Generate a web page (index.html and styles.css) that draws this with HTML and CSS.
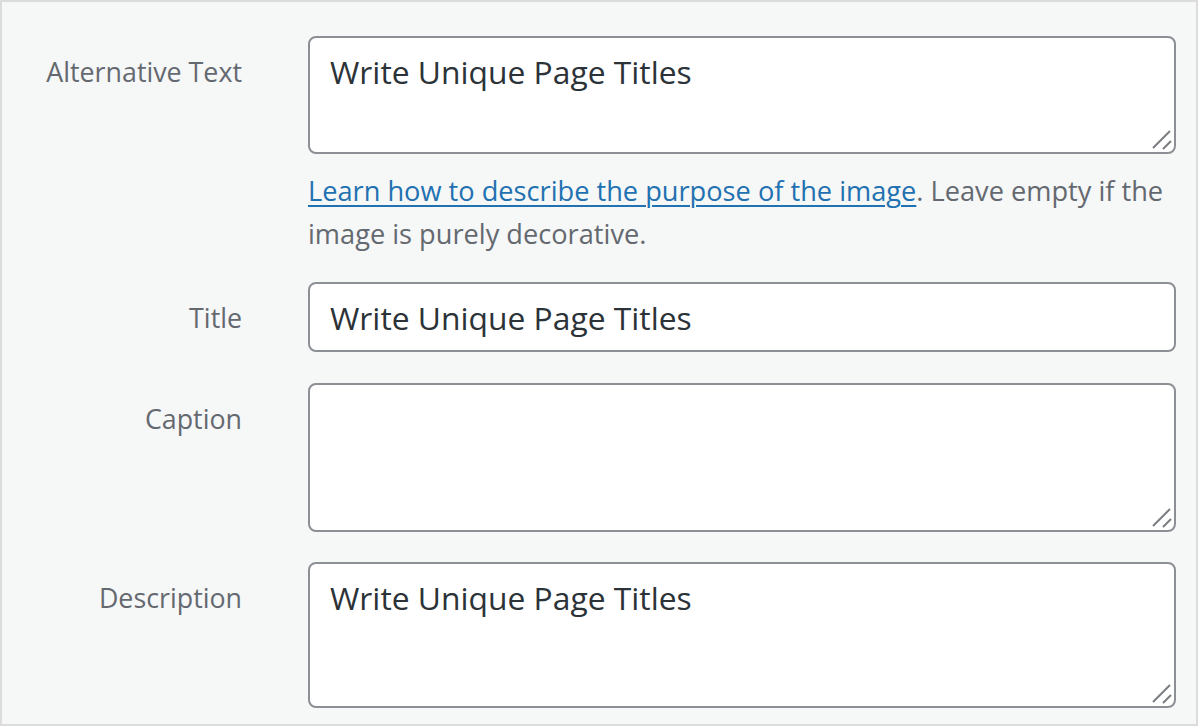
FILE: index.html
```html
<!DOCTYPE html>
<html lang="en">
<head>
<meta charset="utf-8">
<title>Attachment details</title>
<link rel="stylesheet" href="styles.css">
</head>
<body>
<div class="panel">
  <div class="row row-alt">
    <label class="label">Alternative Text</label>
    <div class="field">
      <div class="box box-alt">Write Unique Page Titles<svg class="grip" width="24" height="24" viewBox="0 0 24 24"><path d="M3 20 L20 3 M13 21 L21 13" /></svg></div>
      <p class="help"><a href="#" class="help-link">Learn how to describe the purpose of the image</a>. Leave empty if the image is purely decorative.</p>
    </div>
  </div>
  <div class="row row-title">
    <label class="label">Title</label>
    <div class="field">
      <div class="box box-title">Write Unique Page Titles</div>
    </div>
  </div>
  <div class="row row-caption">
    <label class="label">Caption</label>
    <div class="field">
      <div class="box box-caption"><svg class="grip" width="24" height="24" viewBox="0 0 24 24"><path d="M3 20 L20 3 M13 21 L21 13" /></svg></div>
    </div>
  </div>
  <div class="row row-desc">
    <label class="label">Description</label>
    <div class="field">
      <div class="box box-desc">Write Unique Page Titles<svg class="grip" width="24" height="24" viewBox="0 0 24 24"><path d="M3 20 L20 3 M13 21 L21 13" /></svg></div>
    </div>
  </div>
</div>
</body>
</html>
```
FILE: styles.css
```css
* { box-sizing: border-box; }
html, body { margin: 0; padding: 0; background: #ffffff; }
body { font-family: "Open Sans", "Noto Sans", sans-serif; }

.panel {
  width: 1198px;
  height: 726px;
  border: 2px solid #dcdcde;
  background: #f6f7f7;
  padding: 34px 20px 0 0;
  display: flex;
  flex-direction: column;
}

.row {
  display: grid;
  grid-template-columns: 240px 1fr;
  column-gap: 66px;
}
.row-title { margin-top: 27px; }
.row-caption { margin-top: 31px; }
.row-desc { margin-top: 30px; }

.label {
  text-align: right;
  font-size: 26.8px;
  line-height: 40px;
  color: #646970;
  padding-top: 16px;
}

.box {
  position: relative;
  background: #ffffff;
  border: 2px solid #8c8f94;
  border-radius: 8px;
  padding: 14px 20px 0 20px;
  font-size: 31.8px;
  line-height: 40px;
  color: #2c3338;
}
.box-alt { height: 118px; }
.box-title { height: 70px; }
.box-caption { height: 149px; }
.box-desc { height: 146px; }

.grip {
  position: absolute;
  right: 0;
  bottom: 0;
  fill: none;
  stroke: #7a7d82;
  stroke-width: 2;
}

.help {
  margin: 15px 0 0 0;
  font-size: 27.2px;
  line-height: 43px;
  color: #646970;
}
.help-link {
  color: #2271b1;
  text-decoration: underline;
  text-decoration-thickness: 2px;
  text-underline-offset: 4px;
}
```
